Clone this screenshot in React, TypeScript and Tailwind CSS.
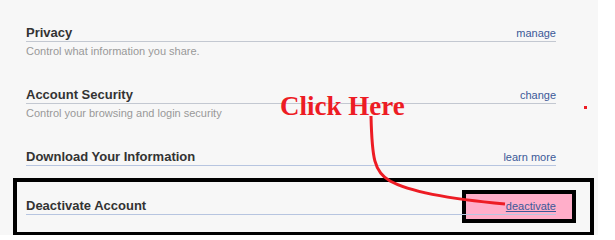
export default function App() {
  return (
    <div className="relative w-[615px] h-[235px] overflow-hidden bg-white font-['Liberation_Sans',Arial,sans-serif]">
      <div className="w-[598px] h-full bg-[#f7f7f7] pt-[25px]">
        {/* Privacy */}
        <div className="h-[62px] pl-[26px] pr-[42px]">
          <div className="flex items-baseline justify-between h-[17px] border-b border-[#c3c8d1] leading-[16px]">
            <span className="text-[13px] font-bold text-[#333333]">Privacy</span>
            <a href="#" className="text-[11px] text-[#3b5998]">manage</a>
          </div>
          <p className="mt-[2px] text-[11px] leading-[14px] text-[#999999]">Control what information you share.</p>
        </div>

        {/* Account Security */}
        <div className="h-[62px] pl-[26px] pr-[42px]">
          <div className="flex items-baseline justify-between h-[17px] border-b border-[#c3c8d1] leading-[16px]">
            <span className="text-[13px] font-bold text-[#333333]">Account Security</span>
            <a href="#" className="text-[11px] text-[#3b5998]">change</a>
          </div>
          <p className="mt-[2px] text-[11px] leading-[14px] text-[#999999]">Control your browsing and login security</p>
        </div>

        {/* Download */}
        <div className="h-[29px] pl-[26px] pr-[42px]">
          <div className="flex items-baseline justify-between h-[17px] border-b border-[#b7c5e0] leading-[16px]">
            <span className="text-[13px] font-bold text-[#333333]">Download Your Information</span>
            <a href="#" className="text-[11px] text-[#3b5998]">learn more</a>
          </div>
        </div>

        {/* Deactivate (highlighted) */}
        <div className="relative ml-[13px] w-[581px] h-[58px] border-4 border-black pt-[16px] pl-[9px] pr-[34px]">
          <div className="absolute left-[445px] top-[8px] w-[114px] h-[33px] bg-[#ffaec9] border-4 border-black" />
          <div className="relative flex items-baseline justify-between h-[17px] border-b border-[#b7c5e0] leading-[16px]">
            <span className="text-[13px] font-bold text-[#333333]">Deactivate Account</span>
            <a href="#" className="text-[11px] text-[#3b5998] underline">deactivate</a>
          </div>
        </div>
      </div>

      {/* annotation */}
      <span className="absolute left-[280px] top-[90px] text-[27px] leading-[32px] font-bold text-[#ed1c24] font-['Liberation_Serif','Times_New_Roman',serif]">
        Click Here
      </span>
      <svg className="absolute left-0 top-0" width="615" height="235" viewBox="0 0 615 235">
        <path d="M371 116 C372 158 374 172 390 181 C410 192 450 199 505 204" fill="none" stroke="#ed1c24" strokeWidth="3" />
        <rect x="584" y="106" width="3" height="3" fill="#ed1c24" />
      </svg>
    </div>
  )
}
